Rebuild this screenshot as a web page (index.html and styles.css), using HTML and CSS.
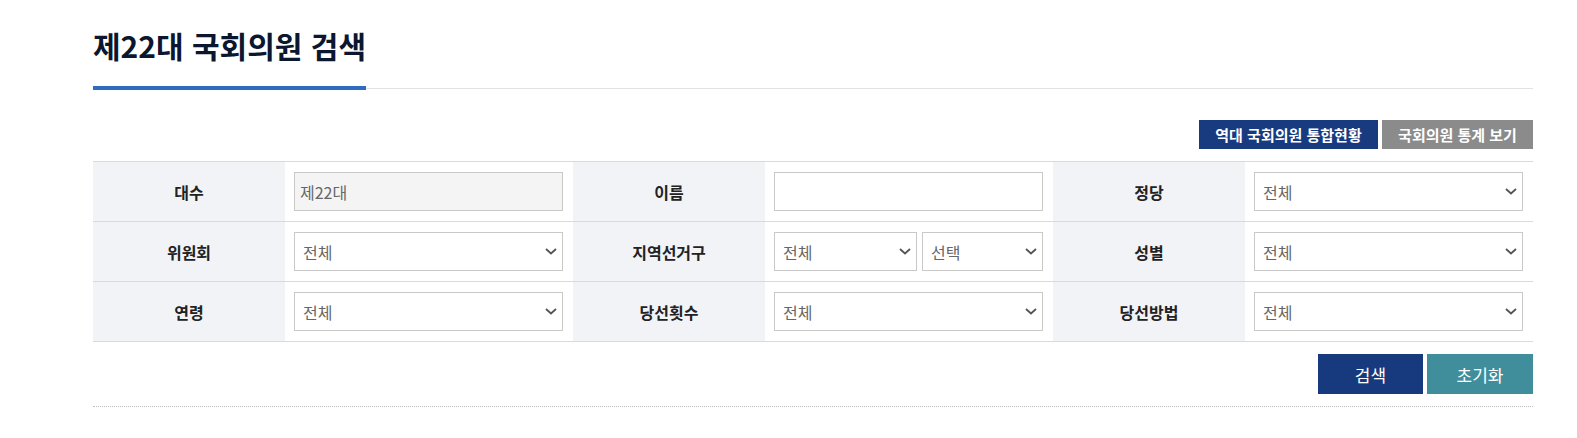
FILE: index.html
```html
<!DOCTYPE html>
<html lang="ko">
<head>
<meta charset="utf-8">
<title>제22대 국회의원 검색</title>
<link rel="stylesheet" href="styles.css">
</head>
<body>
<div class="page">
  <div class="head">
    <h2 class="title">제22대 국회의원 검색</h2>
  </div>

  <div class="top-actions">
    <button class="btn-top btn-navy" type="button">역대 국회의원 통합현황</button>
    <button class="btn-top btn-gray" type="button">국회의원 통계 보기</button>
  </div>

  <div class="search-grid">
    <div class="lbl">대수</div>
    <div class="val"><input class="field field-disabled" type="text" value="제22대" disabled></div>
    <div class="lbl">이름</div>
    <div class="val"><input class="field" type="text" value=""></div>
    <div class="lbl">정당</div>
    <div class="val">
      <div class="sel"><select><option>전체</option></select><svg class="chev" width="12" height="7" viewBox="0 0 12 7"><path d="M1 1l5 4.5L11 1" fill="none" stroke="#555" stroke-width="1.8"/></svg></div>
    </div>

    <div class="lbl">위원회</div>
    <div class="val">
      <div class="sel"><select><option>전체</option></select><svg class="chev" width="12" height="7" viewBox="0 0 12 7"><path d="M1 1l5 4.5L11 1" fill="none" stroke="#555" stroke-width="1.8"/></svg></div>
    </div>
    <div class="lbl">지역선거구</div>
    <div class="val val-split">
      <div class="sel sel-a"><select><option>전체</option></select><svg class="chev" width="12" height="7" viewBox="0 0 12 7"><path d="M1 1l5 4.5L11 1" fill="none" stroke="#555" stroke-width="1.8"/></svg></div>
      <div class="sel sel-b"><select><option>선택</option></select><svg class="chev" width="12" height="7" viewBox="0 0 12 7"><path d="M1 1l5 4.5L11 1" fill="none" stroke="#555" stroke-width="1.8"/></svg></div>
    </div>
    <div class="lbl">성별</div>
    <div class="val">
      <div class="sel"><select><option>전체</option></select><svg class="chev" width="12" height="7" viewBox="0 0 12 7"><path d="M1 1l5 4.5L11 1" fill="none" stroke="#555" stroke-width="1.8"/></svg></div>
    </div>

    <div class="lbl">연령</div>
    <div class="val">
      <div class="sel"><select><option>전체</option></select><svg class="chev" width="12" height="7" viewBox="0 0 12 7"><path d="M1 1l5 4.5L11 1" fill="none" stroke="#555" stroke-width="1.8"/></svg></div>
    </div>
    <div class="lbl">당선횟수</div>
    <div class="val">
      <div class="sel"><select><option>전체</option></select><svg class="chev" width="12" height="7" viewBox="0 0 12 7"><path d="M1 1l5 4.5L11 1" fill="none" stroke="#555" stroke-width="1.8"/></svg></div>
    </div>
    <div class="lbl">당선방법</div>
    <div class="val">
      <div class="sel"><select><option>전체</option></select><svg class="chev" width="12" height="7" viewBox="0 0 12 7"><path d="M1 1l5 4.5L11 1" fill="none" stroke="#555" stroke-width="1.8"/></svg></div>
    </div>
  </div>

  <div class="bottom-actions">
    <button class="btn-main btn-search" type="button">검색</button>
    <button class="btn-main btn-reset" type="button">초기화</button>
  </div>

  <div class="dotted"></div>
</div>
</body>
</html>
```

FILE: styles.css
```css
* { box-sizing: border-box; }

body {
  margin: 0;
  background: #fff;
  font-family: "Noto Sans CJK KR", "Noto Sans", sans-serif;
  color: #222;
}

.page {
  width: 1440px;
  margin-left: 93px;
  padding-top: 25px;
}

.head {
  border-bottom: 1px solid #e2e2e2;
}

.title {
  display: inline-block;
  margin: 0 0 -2px 0;
  padding: 0 0 21px 0;
  font-size: 30px;
  line-height: 40px;
  font-weight: 700;
  letter-spacing: 0;
  color: #0b1730;
  border-bottom: 4px solid #2f6cbd;
}

.top-actions {
  display: flex;
  justify-content: flex-end;
  gap: 4px;
  margin-top: 31px;
}

.btn-top {
  height: 29px;
  border: 0;
  padding: 0;
  font-family: inherit;
  font-size: 15px;
  font-weight: 700;
  color: #fff;
}

.btn-navy { width: 179px; background: #183a7f; }
.btn-gray { width: 151px; background: #8b8b8b; }

.search-grid {
  margin-top: 12px;
  display: grid;
  grid-template-columns: 192px 288px 192px 288px 192px 288px;
  border-top: 1px solid #dadada;
}

.lbl, .val {
  height: 60px;
  border-bottom: 1px solid #dadada;
}

.lbl {
  background: #f2f3f7;
  display: flex;
  align-items: center;
  justify-content: center;
  font-size: 16px;
  font-weight: 700;
  color: #222;
}

.val {
  padding: 10px 10px 10px 9px;
  background: #fff;
}

.val-split {
  display: flex;
  gap: 5px;
}

.field {
  display: block;
  width: 100%;
  height: 39px;
  border: 1px solid #c9c9c9;
  background: #fff;
  padding: 0 8px;
  font-family: inherit;
  font-size: 16px;
  color: #666;
  outline: none;
}

.field-disabled {
  background: #f4f4f4;
  padding-left: 5px;
  color: #666;
  -webkit-text-fill-color: #666;
  opacity: 1;
}

.sel {
  position: relative;
  width: 100%;
  height: 39px;
}

.sel-a { width: 143px; flex: none; }
.sel-b { width: 121px; flex: none; }

.sel select {
  -webkit-appearance: none;
  appearance: none;
  display: block;
  width: 100%;
  height: 39px;
  border: 1px solid #c9c9c9;
  border-radius: 0;
  background: #fff;
  padding: 0 26px 0 8px;
  font-family: inherit;
  font-size: 16px;
  color: #666;
  outline: none;
}

.chev {
  position: absolute;
  right: 6px;
  top: 16px;
  pointer-events: none;
}

.bottom-actions {
  display: flex;
  justify-content: flex-end;
  gap: 4px;
  margin-top: 12px;
}

.btn-main {
  height: 40px;
  border: 0;
  padding: 0;
  font-family: inherit;
  font-size: 17px;
  font-weight: 400;
  color: #fff;
}

.btn-search { width: 105px; background: #173a7e; }
.btn-reset { width: 106px; background: #408e9c; }

.dotted {
  margin-top: 12px;
  border-top: 1px dotted #bdbdbd;
}
```
